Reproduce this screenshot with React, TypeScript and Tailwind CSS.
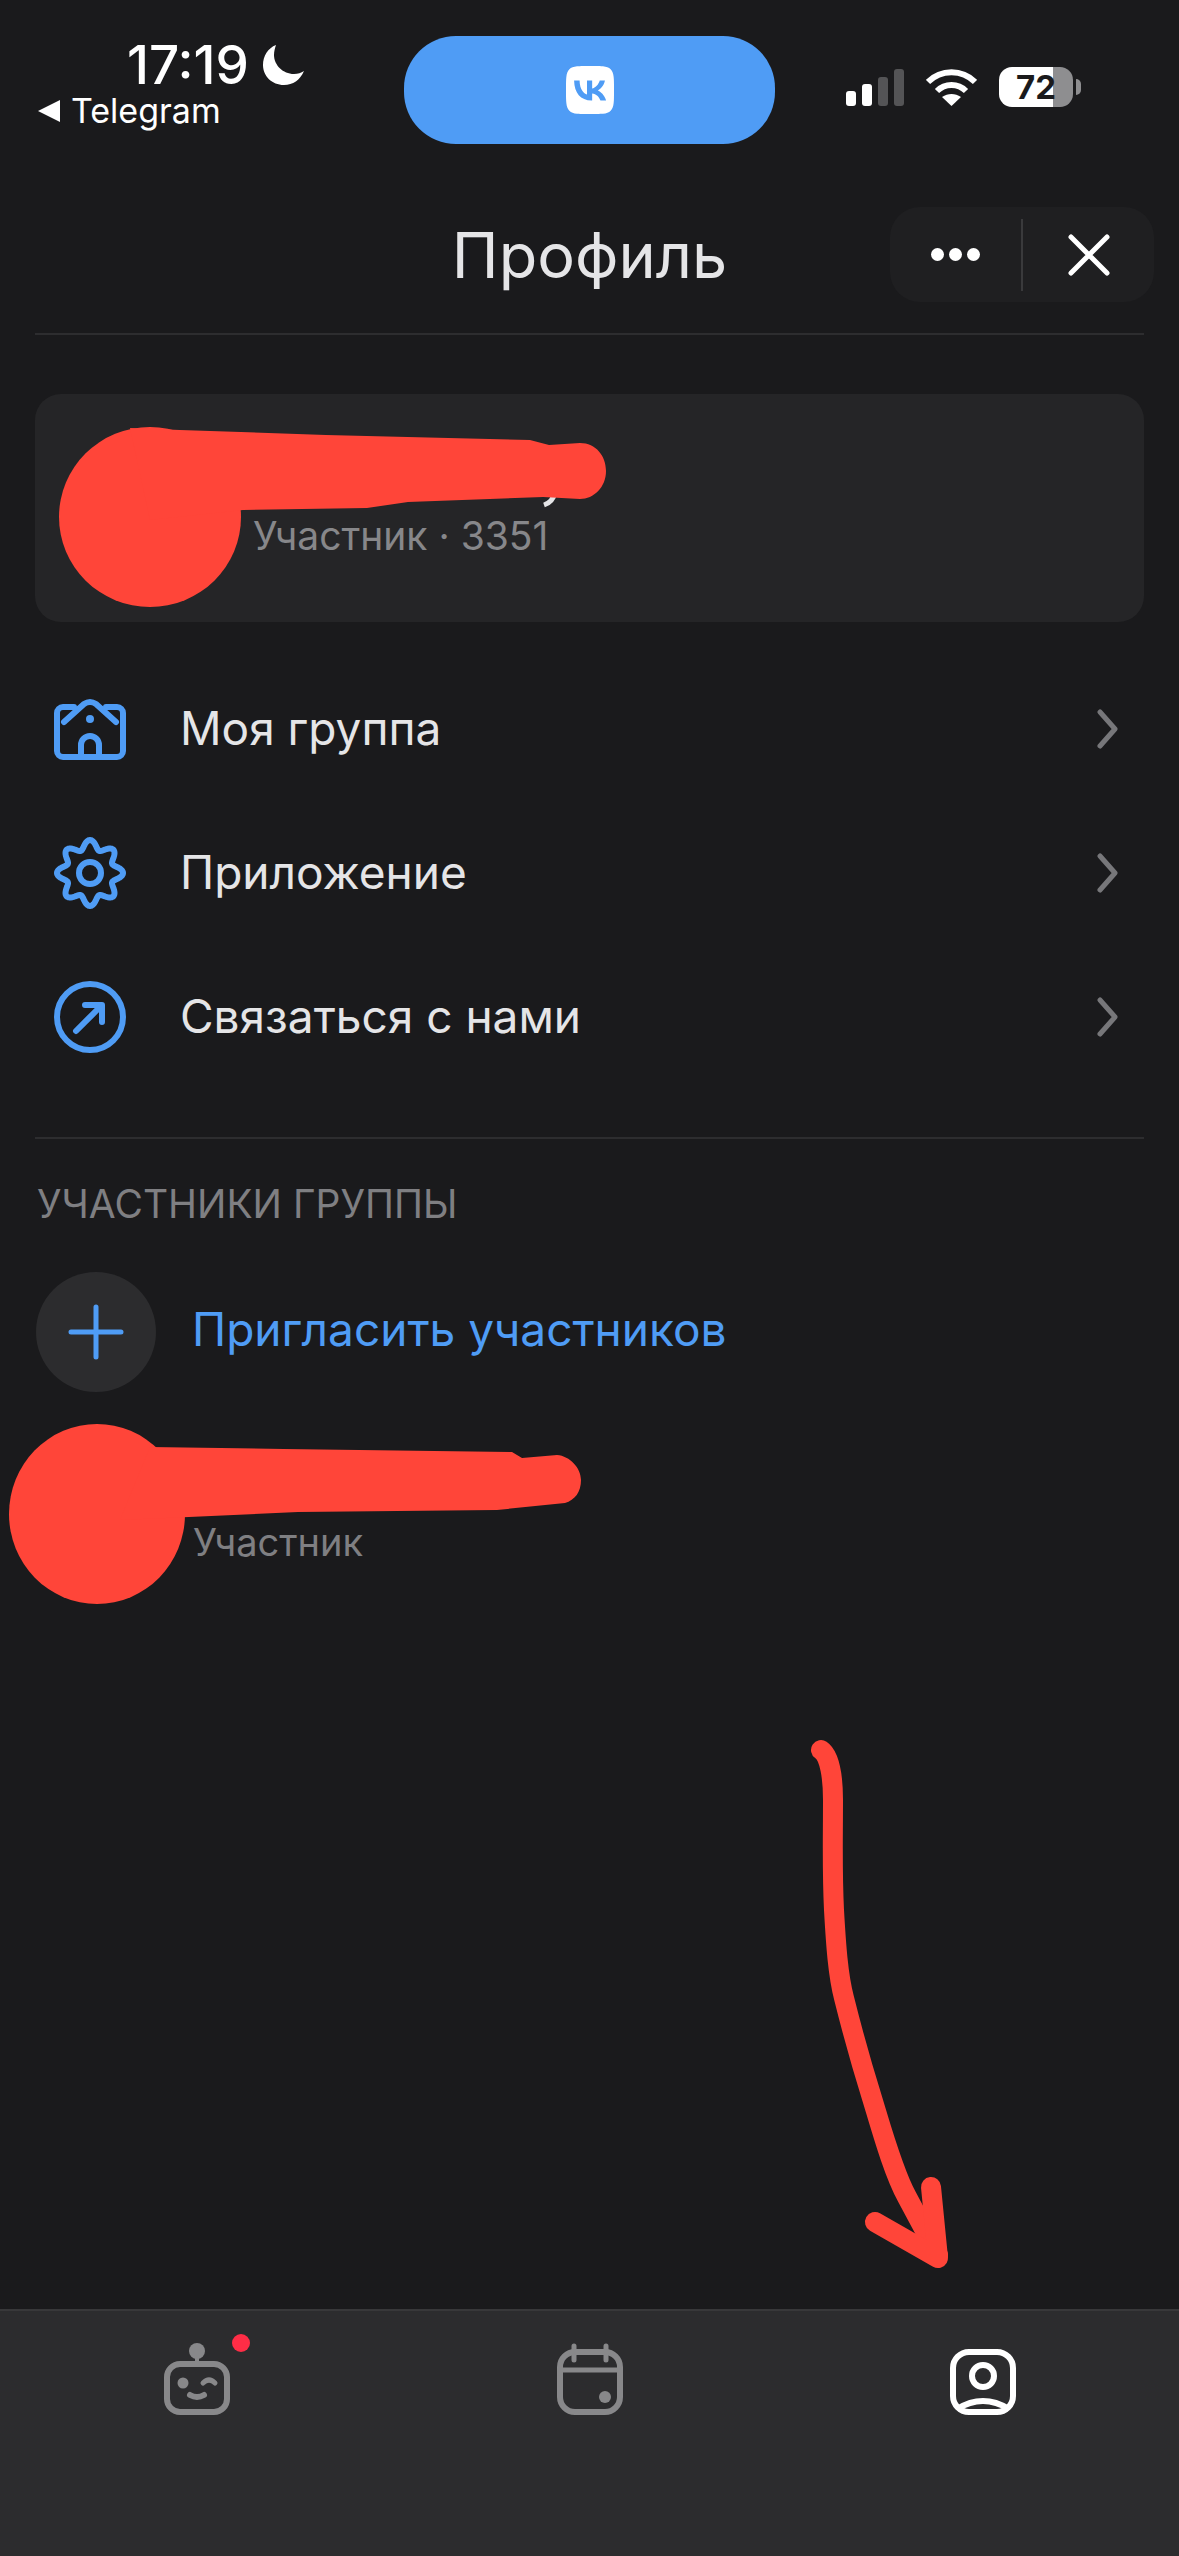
import { SiVk } from "react-icons/si";

const MENU = [
  { label: "Моя группа", icon: <HomeIcon /> },
  { label: "Приложение", icon: <GearIcon /> },
  { label: "Связаться с нами", icon: <ArrowCircleIcon /> },
];

function gearPath() {
  const pts: string[] = [];
  for (let i = 0; i < 240; i++) {
    const a = (i / 240) * Math.PI * 2;
    const r = 28.5 + 4.5 * Math.cos(8 * a);
    const x = 36 + r * Math.sin(a);
    const y = 36 - r * Math.cos(a);
    pts.push(`${i === 0 ? "M" : "L"}${x.toFixed(2)} ${y.toFixed(2)}`);
  }
  return pts.join(" ") + "Z";
}

function HomeIcon() {
  return (
    <svg width="72" height="62" viewBox="0 0 72 62" fill="none" stroke="#4f9cf5" strokeWidth="6" strokeLinecap="round" strokeLinejoin="round">
      <path d="M20 9H9a6 6 0 0 0-6 6v38a6 6 0 0 0 6 6h54a6 6 0 0 0 6-6V15a6 6 0 0 0-6-6H52" />
      <path d="M10 24 30 6q6-4 12 0l20 18" />
      <path d="M27 59V47a9 9 0 0 1 18 0v12" />
      <circle cx="36" cy="21" r="4" fill="#4f9cf5" stroke="none" />
    </svg>
  );
}

function GearIcon() {
  return (
    <svg width="72" height="72" viewBox="0 0 72 72" fill="none" stroke="#4f9cf5" strokeWidth="6" strokeLinejoin="round">
      <path d={gearPath()} />
      <circle cx="36" cy="36" r="11" />
    </svg>
  );
}

function ArrowCircleIcon() {
  return (
    <svg width="72" height="72" viewBox="0 0 72 72" fill="none" stroke="#4f9cf5" strokeWidth="6" strokeLinecap="round" strokeLinejoin="round">
      <circle cx="36" cy="36" r="33" />
      <path d="M22 50 47 25M31 24h17v17" />
    </svg>
  );
}

function Chevron() {
  return (
    <svg width="21" height="40" viewBox="0 0 21 40" fill="none" stroke="#77777a" strokeWidth="5" strokeLinecap="round" strokeLinejoin="round">
      <path d="M3 3l15 17L3 37" />
    </svg>
  );
}

function BotIcon() {
  return (
    <svg width="66" height="72" viewBox="0 0 66 72" fill="#88888a" stroke="none">
      <circle cx="33" cy="8" r="8" />
      <rect x="31" y="12" width="4" height="10" />
      <rect x="3" y="21" width="60" height="48" rx="13" fill="none" stroke="#88888a" strokeWidth="6" />
      <circle cx="19" cy="40" r="5.5" />
      <path d="M39 40q6-6 12 0" fill="none" stroke="#88888a" strokeWidth="5" strokeLinecap="round" />
      <path d="M26 52q7 4 14 0" fill="none" stroke="#88888a" strokeWidth="6" strokeLinecap="round" />
    </svg>
  );
}

function CalendarIcon() {
  return (
    <svg width="66" height="72" viewBox="0 0 66 72" fill="none" stroke="#88888a" strokeWidth="6" strokeLinecap="round">
      <rect x="3" y="9" width="60" height="60" rx="15" />
      <path d="M3 27h60" strokeWidth="5" strokeLinecap="butt" />
      <path d="M17 3v14M49 3v14" strokeWidth="5" />
      <circle cx="48" cy="54" r="6" fill="#88888a" stroke="none" />
    </svg>
  );
}

function ProfileIcon() {
  return (
    <svg width="66" height="66" viewBox="0 0 66 66" fill="none" stroke="#ffffff" strokeWidth="6">
      <rect x="3" y="3" width="60" height="60" rx="16" />
      <circle cx="33" cy="27" r="11" />
      <path d="M7 60q26-16 52 0" />
    </svg>
  );
}

function Scribbles() {
  return (
    <svg className="absolute inset-0 pointer-events-none" width="1179" height="2556" viewBox="0 0 1179 2556" fill="#ff4539">
      {/* name tail peeking out of the top scribble */}
      <path d="M555 492q-2 10-11 13" fill="none" stroke="#e5e5e7" strokeWidth="5" />
      <ellipse cx="150" cy="517" rx="91" ry="90" />
      <path d="M130 428 180 430 326 435 530 440 549 445 580 443C596 443 606 456 606 471 606 487 594 499 580 499L543 497 408 502 367 508 243 510 150 520Z" />
      <ellipse cx="97" cy="1514" rx="88" ry="90" />
      <path d="M150 1447 284 1449 512 1452 522 1458 557 1455C570 1456 581 1468 581 1480 581 1492 575 1500 565 1503L497 1510 298 1512 189 1517 120 1520Z" />
      <path d="M821 1750C830 1756 833 1778 833 1800 833 1840 832 1870 834 1910 836 1945 838 1975 844 1998 852 2030 862 2066 872 2098 880 2124 893 2172 907 2197L938 2255" fill="none" stroke="#ff4539" strokeWidth="20" strokeLinecap="round" />
      <path d="M875 2222 938 2258 931 2187" fill="none" stroke="#ff4539" strokeWidth="20" strokeLinecap="round" strokeLinejoin="round" />
    </svg>
  );
}

export default function App() {
  return (
    <div className="relative flex h-[2556px] w-[1179px] flex-col overflow-hidden bg-[#1a1a1c] font-['Inter',sans-serif] text-white">
      {/* status bar */}
      <div className="flex h-[190px] items-start">
        <div className="w-[404px] pt-[37px]">
          <div className="ml-[127px] flex h-[56px] items-center gap-[14px]">
            <span className="text-[53px] leading-none font-medium">17:19</span>
            <svg width="41" height="40" viewBox="0 0 41 40" fill="#ffffff">
              <path d="M13 0C5 3 0 11 0 20 0 31 9 40 21 40 30 40 37 35 41 26 38 28 35 29 31 29 20 29 11 20 11 10 11 6 12 3 13 0Z" />
            </svg>
          </div>
          <div className="ml-[38px] flex h-[36px] items-center gap-[11px]">
            <svg width="22" height="22" viewBox="0 0 22 22" fill="#ffffff">
              <path d="M22 0v22L0 11Z" />
            </svg>
            <span className="text-[34px] leading-none">Telegram</span>
          </div>
        </div>
        <div className="mt-[36px] flex h-[108px] w-[371px] items-center justify-center rounded-[52px] bg-[#4f9cf5]">
          <SiVk className="h-[48px] w-[48px] text-white" />
        </div>
        <div className="mt-[67px] ml-[71px] flex h-[40px] items-center">
          <div className="flex h-[37px] items-end gap-[6px]">
            <div className="h-[15px] w-[10px] rounded-[3px] bg-white" />
            <div className="h-[22px] w-[10px] rounded-[3px] bg-white" />
            <div className="h-[29px] w-[10px] rounded-[3px] bg-[#545456]" />
            <div className="h-[37px] w-[10px] rounded-[3px] bg-[#545456]" />
          </div>
          <svg className="ml-[22px]" width="51" height="37" viewBox="0 0 51 37" fill="none" stroke="#ffffff" strokeWidth="6">
            <path d="M2 13C15 0 36 0 49 13" />
            <path d="M11 22C19 14 32 14 40 22" />
            <path d="M25.5 37 16 28C22 24 29 24 35 28Z" fill="#ffffff" stroke="none" />
          </svg>
          <div className="ml-[22px] flex h-[40px] w-[74px] items-center justify-center rounded-[13px] bg-[linear-gradient(90deg,#ffffff_73%,#8e8e90_73%)] text-[33px] leading-none font-bold text-[#1a1a1c]">
            72
          </div>
          <div className="ml-[3px] h-[16px] w-[5px] rounded-r-full bg-[#8e8e90]" />
        </div>
      </div>

      {/* header */}
      <div className="grid h-[143px] grid-cols-[1fr_auto_1fr] items-start pr-[25px] pl-[25px]">
        <div />
        <h1 className="pt-[29px] text-[63px] leading-[72px] font-normal text-[#e5e5e7]">Профиль</h1>
        <div className="flex justify-end pt-[17px]">
          <div className="flex h-[95px] w-[264px] items-center rounded-[30px] bg-[#1f1f21]">
            <div className="flex w-[131px] justify-center gap-[5px]">
              <span className="h-[13px] w-[13px] rounded-full bg-white" />
              <span className="h-[13px] w-[13px] rounded-full bg-white" />
              <span className="h-[13px] w-[13px] rounded-full bg-white" />
            </div>
            <div className="h-[72px] w-[2px] bg-[#3a3a3c]" />
            <div className="flex flex-1 justify-center">
              <svg width="42" height="42" viewBox="0 0 42 42" fill="none" stroke="#ffffff" strokeWidth="5" strokeLinecap="round">
                <path d="M3 3l36 36M39 3 3 39" />
              </svg>
            </div>
          </div>
        </div>
      </div>
      <div className="mx-[35px] h-[2px] bg-[#2d2d2f]" />

      {/* profile card */}
      <div className="mx-[35px] mt-[59px] flex h-[228px] items-end rounded-[26px] bg-[#252527] pb-[64px] pl-[218px]">
        <span className="text-[39px] leading-[44px] text-[#87878a]">Участник · 3351</span>
      </div>

      {/* menu */}
      <div className="mt-[35px] flex flex-col">
        {MENU.map((item) => (
          <div key={item.label} className="flex h-[144px] items-center pr-[61px] pl-[54px]">
            <div className="flex w-[72px] justify-center">{item.icon}</div>
            <span className="-mt-[2px] ml-[54px] flex-1 text-[46px] leading-[54px] text-[#e5e5e7]">{item.label}</span>
            <Chevron />
          </div>
        ))}
      </div>
      <div className="mx-[35px] mt-[48px] h-[2px] bg-[#2d2d2f]" />

      {/* group members */}
      <h2 className="mt-[43px] ml-[37px] text-[39px] leading-[44px] font-normal text-[#7f7f82]">УЧАСТНИКИ ГРУППЫ</h2>
      <div className="mt-[46px] ml-[36px] flex items-center gap-[36px]">
        <div className="flex h-[120px] w-[120px] items-center justify-center rounded-full bg-[#2c2c2e]">
          <svg width="56" height="56" viewBox="0 0 56 56" fill="none" stroke="#4f9cf5" strokeWidth="5" strokeLinecap="round">
            <path d="M28 3v50M3 28h50" />
          </svg>
        </div>
        <span className="-mt-[6px] text-[46px] leading-[54px] text-[#4f9cf5]">Пригласить участников</span>
      </div>
      <div className="mt-[128px] ml-[193px] text-[38px] leading-[44px] text-[#7f7f82]">Участник</div>

      {/* tab bar */}
      <div className="mt-auto flex h-[247px] items-start justify-around border-t-2 border-[#38383a] bg-[#2c2c2e] pt-[38px]">
        <div className="relative -mt-[6px] flex w-[66px] justify-center">
          <BotIcon />
          <span className="absolute top-[-9px] left-[68px] h-[18px] w-[18px] rounded-full bg-[#ff2d46]" />
        </div>
        <div className="-mt-[6px]">
          <CalendarIcon />
        </div>
        <ProfileIcon />
      </div>

      <Scribbles />
    </div>
  );
}
